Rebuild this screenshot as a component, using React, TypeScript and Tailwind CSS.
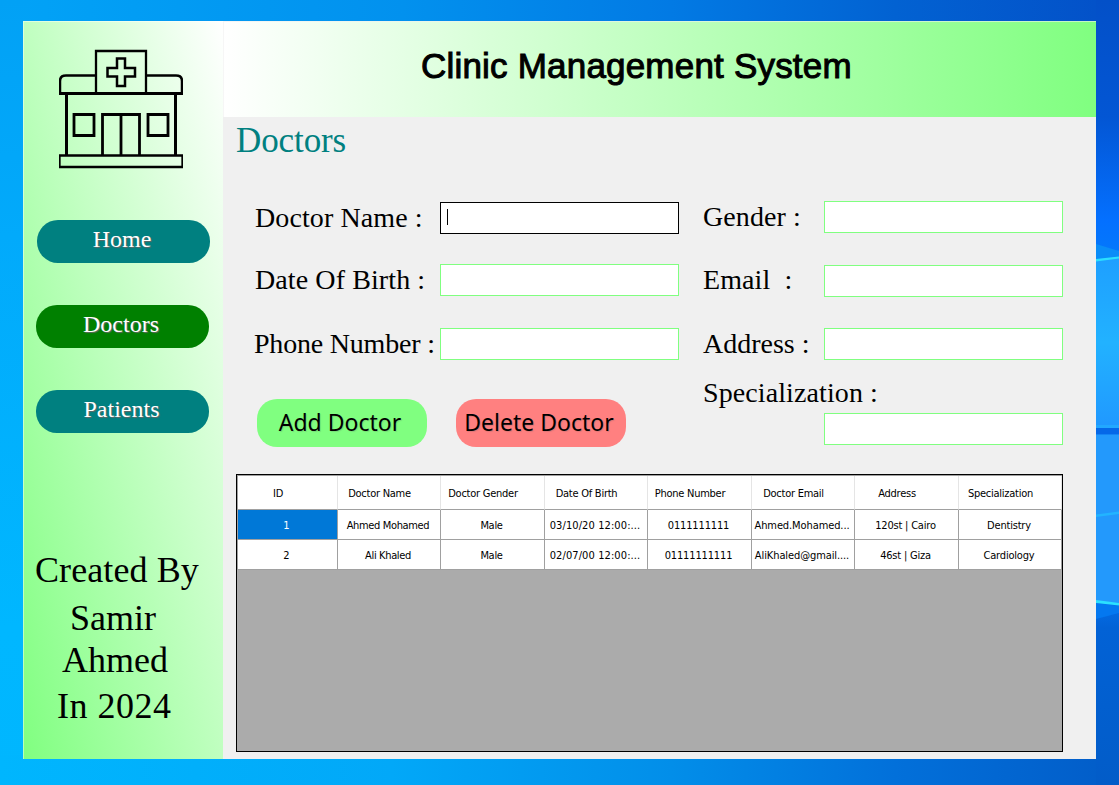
import React from "react";

const serif = "font-['Liberation_Serif',serif]";

function Wallpaper() {
  return (
    <svg className="absolute inset-0 h-full w-full" viewBox="0 0 1119 785" preserveAspectRatio="none" aria-hidden="true">
      <defs>
        <linearGradient id="top" x1="0" x2="1">
          <stop offset="0" stopColor="#02a3f7" />
          <stop offset="0.36" stopColor="#0291ee" />
          <stop offset="0.6" stopColor="#027ae4" />
          <stop offset="0.8" stopColor="#0262d2" />
          <stop offset="1" stopColor="#0350c8" />
        </linearGradient>
        <linearGradient id="left" x1="0" x2="0" y1="0" y2="1">
          <stop offset="0" stopColor="#02a1f5" />
          <stop offset="0.3" stopColor="#02aafb" />
          <stop offset="0.8" stopColor="#00b7ff" />
          <stop offset="1" stopColor="#00b6fe" />
        </linearGradient>
        <linearGradient id="bottom" x1="0" x2="1">
          <stop offset="0" stopColor="#00b6fe" />
          <stop offset="0.35" stopColor="#02a8f8" />
          <stop offset="0.6" stopColor="#028ee9" />
          <stop offset="0.8" stopColor="#0270da" />
          <stop offset="1" stopColor="#025cc8" />
        </linearGradient>
        <linearGradient id="right" x1="0" x2="0" y1="0" y2="1">
          <stop offset="0" stopColor="#0350c8" />
          <stop offset="0.15" stopColor="#0356d4" />
          <stop offset="0.28" stopColor="#0470ff" />
          <stop offset="0.33" stopColor="#0479fb" />
          <stop offset="0.76" stopColor="#0470ec" />
          <stop offset="0.8" stopColor="#0262d6" />
          <stop offset="1" stopColor="#025cc8" />
        </linearGradient>
        <linearGradient id="pane" x1="0" x2="0" y1="0" y2="1">
          <stop offset="0" stopColor="#1e9fff" />
          <stop offset="0.5" stopColor="#22b2ff" />
          <stop offset="1" stopColor="#2098ff" />
        </linearGradient>
      </defs>
      <rect width="1119" height="30" fill="url(#top)" />
      <rect width="30" height="785" fill="url(#left)" />
      <rect y="755" width="1119" height="30" fill="url(#bottom)" />
      <rect x="1096" width="23" height="785" fill="url(#right)" />
      <path d="M1096 244L1119 251V258L1096 260Z" fill="#0a8df8" />
      <path d="M1096 260L1119 257V428H1096Z" fill="url(#pane)" />
      <path d="M1096 259L1119 256.500V258.500L1096 261.500Z" fill="#2be0ff" />
      <rect x="1096" y="425" width="23" height="3" fill="#22a8ff" />
      <rect x="1096" y="428" width="23" height="6.500" fill="#0568e8" />
      <path d="M1096 434.500H1119V604L1096 601Z" fill="#2399fc" />
      <path d="M1096 514.500L1119 511.500V514L1096 517Z" fill="#22b4ff" />
      <path d="M1096 603L1119 606V613L1096 619Z" fill="#0478f0" />
      <path d="M1096 600L1119 603V605.500L1096 603Z" fill="#2be0ff" />
    </svg>
  );
}

function ClinicLogo() {
  return (
    <svg className="ml-9 mt-7 h-[120px] w-[124px]" viewBox="59 49 124 120" fill="none" stroke="#000" strokeWidth="2.500">
      <path d="M96 93V51H146V93" strokeWidth="2.300" />
      <path d="M96 75.500H66Q60 75.500 60 81V93M146 75.500H176Q182 75.500 182 81V93" />
      <path d="M59 93.500H183" strokeWidth="3" />
      <path d="M66.500 94V155M175.500 94V155" strokeWidth="3" />
      <path d="M117 58.500H125V68H135V76.500H125V86H117V76.500H107.500V68H117Z" />
      <path d="M74 114.500H94V135.500H74ZM148 114.500H168V135.500H148Z" strokeWidth="2.800" />
      <path d="M102.500 155V114.500H139.500V155M121 115V155" strokeWidth="2.800" />
      <path d="M59.500 155.500H182.500V167H59.500Z" strokeWidth="2.300" />
    </svg>
  );
}

function NavButton({ label, className }: { label: string; className: string }) {
  return (
    <button className={"flex h-[43px] w-[173px] items-start justify-center rounded-[21px] text-[24px] leading-[39px] text-white [text-shadow:1px_1px_1px_#666] " + className}>
      {label}
    </button>
  );
}

function Field({ label, labelClass, inputClass }: { label: string; labelClass: string; inputClass: string }) {
  return (
    <label className="flex items-start">
      <span className={"shrink-0 whitespace-pre text-[28px] leading-8 " + labelClass}>{label}</span>
      <span className={"flex h-8 w-[239px] shrink-0 items-start border bg-white " + inputClass}>
        {label === "Doctor Name :" && <span className="ml-1.5 mt-1.5 h-4 w-px bg-black" />}
      </span>
    </label>
  );
}

const headers = ["ID", "Doctor Name", "Doctor Gender", "Date Of Birth", "Phone Number", "Doctor Email", "Address", "Specialization"];
const rows = [
  ["1", "Ahmed Mohamed", "Male", "03/10/20 12:00:...", "0111111111", "Ahmed.Mohamed...", "120st | Cairo", "Dentistry"],
  ["2", "Ali Khaled", "Male", "02/07/00 12:00:...", "01111111111", "AliKhaled@gmail....", "46st | Giza", "Cardiology"],
];
const columns = "grid grid-cols-[100px_103px_104px_103px_104px_103px_104px_103px]";
const cellTracking = [
  "",
  "tracking-[-0.35px]",
  "tracking-[-0.3px]",
  "tracking-[0.1px]",
  "tracking-[-0.15px]",
  "tracking-[-0.1px]",
  "tracking-[-0.2px]",
  "tracking-[-0.2px]",
];

function DoctorsTable() {
  return (
    <div className="ml-[13px] mt-[27px] h-[278px] w-[827px] border border-black bg-[#ababab] font-['DejaVu_Sans_Condensed','DejaVu_Sans',sans-serif] text-[11px] text-black [font-stretch:condensed]">
      <div className="w-[825px] border-l border-t border-[#a0a0a0]">
        <div className={columns}>
          {headers.map((h) => (
            <div key={h} className="flex h-[34px] items-center justify-center whitespace-nowrap border-b border-r border-b-[#a0a0a0] border-r-[#e5e5e5] bg-white pr-[19px] pt-[3px] tracking-[-0.25px]">
              {h}
            </div>
          ))}
        </div>
        {rows.map((row) => (
          <div key={row[0]} className={columns}>
            {row.map((cell, i) => (
              <div
                key={i}
                className={
                  "flex h-[30px] items-center justify-center whitespace-nowrap border-b border-r border-[#a0a0a0] pr-[2px] pt-[3px] " +
                  cellTracking[i] +
                  (i === 0 && row[0] === "1" ? " bg-[#0078d7] text-white" : " bg-white")
                }
              >
                {cell}
              </div>
            ))}
          </div>
        ))}
      </div>
    </div>
  );
}

export default function App() {
  return (
    <div className={"relative h-[785px] w-[1119px] overflow-hidden bg-[#0090f0] pl-[23px] pt-[21px] text-black " + serif}>
      <Wallpaper />
      <div className="relative flex h-[738px] w-[1073px] bg-[#f0f0f0]">
        <aside className="flex w-[200px] shrink-0 flex-col bg-[linear-gradient(to_bottom_left,#ffffff,#80ff80)] shadow-[inset_1px_1px_0_rgba(255,255,255,0.45)]">
          <ClinicLogo />
          <nav className="mt-[51px] flex flex-col gap-[42px] pl-[13px]">
            <NavButton label="Home" className="ml-px bg-[#008080] pr-[3px]" />
            <NavButton label="Doctors" className="bg-[#008000] pr-[3px]" />
            <NavButton label="Patients" className="bg-[#008080] pr-[2px]" />
          </nav>
          <div className="mt-[115.500px] flex flex-col text-[36px] leading-[42px]">
            <p className="whitespace-nowrap pl-3 tracking-[0.1px]">Created By</p>
            <p className="mt-1.5 pl-[47px]">Samir</p>
            <p className="pl-[39px]">Ahmed</p>
            <p className="mt-1 pl-[34px] tracking-[0.5px]">In 2024</p>
          </div>
        </aside>
        <main className="flex w-[873px] flex-col">
          <header className="flex h-24 shrink-0 items-center bg-linear-to-r/srgb from-white to-[#80ff80] pb-[7px] pl-[198px] shadow-[inset_1px_1px_0_rgba(240,240,240,0.6)]">
            <h1 className="whitespace-nowrap font-['Liberation_Sans',sans-serif] text-[35px] font-normal leading-[48px] tracking-[0.2px] [-webkit-text-stroke:1px_#000]">
              Clinic Management System
            </h1>
          </header>
          <h2 className="ml-[13px] mt-1 h-10 text-[35px] leading-10 tracking-[-0.1px] text-[#008080]">Doctors</h2>
          <div className="flex h-[286px] pt-10">
            <section className="ml-[31px] flex w-[425px] flex-col">
              <Field label="Doctor Name :" labelClass="mt-px w-[186px] pl-px tracking-[0.1px]" inputClass="mt-px border-black" />
              <div className="h-[30px]" />
              <Field label="Date Of Birth :" labelClass="w-[186px] pl-px tracking-[0.1px]" inputClass="border-[#80ff80]" />
              <div className="h-8" />
              <Field label="Phone Number :" labelClass="w-[186px] tracking-[-0.2px]" inputClass="border-[#80ff80]" />
              <div className="mt-[38.500px] flex gap-[29px] pl-[2.500px] font-['Noto_Sans',sans-serif] text-[23px]">
                <button className="h-12 w-[170px] rounded-[20px] bg-[#80ff80] pb-0.5 pr-[3px] leading-[46px] [text-shadow:1px_1px_1px_#7d7]">Add Doctor</button>
                <button className="h-12 w-[170px] whitespace-nowrap rounded-[20px] bg-[#ff8080] pb-0.5 pr-[3px] leading-[46px] [text-shadow:1px_1px_1px_#d77]">Delete Doctor</button>
              </div>
            </section>
            <section className="ml-6 flex flex-col">
              <Field label="Gender :" labelClass="w-[121px] tracking-[0.1px]" inputClass="border-[#80ff80]" />
              <div className="h-8" />
              <Field label="Email  :" labelClass="-mt-px w-[121px] tracking-[0.1px]" inputClass="border-[#80ff80]" />
              <div className="h-[31px]" />
              <Field label="Address :" labelClass="w-[121px]" inputClass="border-[#80ff80]" />
              <label className="mt-[17px] flex w-[360px] flex-col">
                <span className="text-[28px] leading-8 tracking-[0.1px]">Specialization :</span>
                <span className="mt-1 h-8 w-[239px] self-end border border-[#80ff80] bg-white" />
              </label>
            </section>
          </div>
          <DoctorsTable />
        </main>
      </div>
    </div>
  );
}
